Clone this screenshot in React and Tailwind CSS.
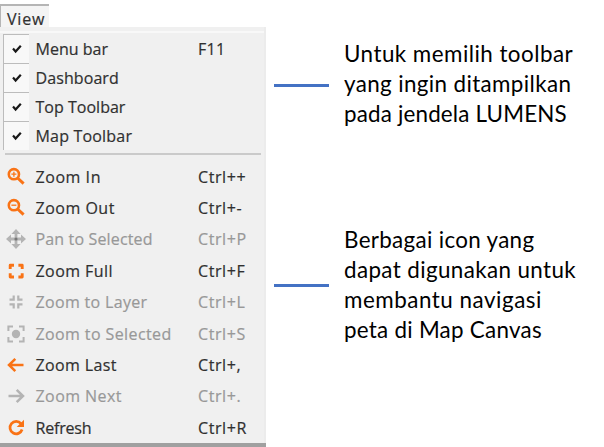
import React from "react";

const Svg = ({ children }) => (
  <svg viewBox="0 0 20 20" className="h-5 w-5 shrink-0" fill="none" stroke="currentColor">
    {children}
  </svg>
);

const Magnifier = ({ plus }) => (
  <Svg>
    <circle cx="7.9" cy="7.2" r="5.1" strokeWidth="2.6" />
    <path d="M11.6 11L17.6 16.6" strokeWidth="3" />
    <path d={plus ? "M5.4 7.2h5M7.9 4.7v5" : "M5.4 7.2h5"} strokeWidth="1.3" />
  </Svg>
);

const Pan = () => (
  <Svg>
    <path d="M10 0l4.6 5H5.4zM10 20l4.6-5H5.4zM0 10l5-4.6v9.2zM20 10l-5-4.6v9.2z" fill="currentColor" stroke="none" />
    <path d="M10 4v12M4 10h12" strokeWidth="2.8" />
    <circle cx="10" cy="10" r="1.6" fill="#777" stroke="none" />
  </Svg>
);

const Full = () => (
  <Svg>
    <path d="M4.2 8V4.2H8M12.4 4.2h3.8V8M16.2 12.2V16h-3.8M8 16H4.2v-3.8" strokeWidth="2.9" strokeLinejoin="round" />
  </Svg>
);

const Layer = () => (
  <Svg>
    <path d="M3.5 7.7h4.2V3.5M16.5 7.7h-4.2V3.5M3.5 12.3h4.2v4.2M16.5 12.3h-4.2v4.2" strokeWidth="2.2" />
  </Svg>
);

const Selected = () => (
  <Svg>
    <path d="M2.4 7V2.4H7M13 2.4h4.6V7M17.6 13v4.6H13M7 17.6H2.4V13" strokeWidth="2" />
    <circle cx="10" cy="10" r="4.2" fill="currentColor" stroke="none" />
  </Svg>
);

const Arrow = ({ right }) => (
  <Svg>
    <path d={right ? "M2.5 10h14M10.7 3.8L17 10l-6.3 6.2" : "M17.5 10h-14M9.3 3.8L3 10l6.3 6.2"} strokeWidth="2.5" />
  </Svg>
);

const Reload = () => (
  <Svg>
    <path d="M15 5.7A6.2 6.2 0 1 0 16.1 11.5" strokeWidth="2.7" />
    <path d="M18 1.8v7.3h-7.3z" fill="currentColor" stroke="none" />
  </Svg>
);

const toggles = [
  ["Menu bar", "F11", "tracking-[0.02px]"],
  ["Dashboard", "", "tracking-[0.09px]"],
  ["Top Toolbar", "", "tracking-[0.02px]"],
  ["Map Toolbar", "", "tracking-[0.19px]"],
];

const actions = [
  ["Zoom In", "Ctrl++", <Magnifier plus />, true, "tracking-[0.55px]"],
  ["Zoom Out", "Ctrl+-", <Magnifier />, true, "tracking-[0.5px]"],
  ["Pan to Selected", "Ctrl+P", <Pan />, false, "tracking-[0.15px]"],
  ["Zoom Full", "Ctrl+F", <Full />, true, "tracking-[0.45px]"],
  ["Zoom to Layer", "Ctrl+L", <Layer />, false, "tracking-[0.33px]"],
  ["Zoom to Selected", "Ctrl+S", <Selected />, false, "tracking-[0.4px]"],
  ["Zoom Last", "Ctrl+,", <Arrow />, true, "tracking-[0.37px]"],
  ["Zoom Next", "Ctrl+.", <Arrow right />, false, "tracking-[0.43px]"],
  ["Refresh", "Ctrl+R", <Reload />, true, "tracking-[-0.2px]"],
];

const Note = ({ lines, rule }) => (
  <div className="flex items-start">
    <div className={"h-[3px] w-[55px] shrink-0 bg-[#4472c4] " + rule} />
    <div className="ml-[15px] whitespace-nowrap text-[22.4px] leading-[30px] text-black">
      {lines.map(([text, tracking]) => (
        <p key={text} className={tracking}>{text}</p>
      ))}
    </div>
  </div>
);

export default function App() {
  return (
    <div className="flex h-[447px] w-[604px] overflow-hidden bg-white">
      <div className="flex w-[266px] shrink-0 flex-col font-['Open_Sans','Noto_Sans',sans-serif] text-[16px] text-[#303030] [-webkit-text-stroke:0.2px]">
        <div className="mt-1 h-[23px] w-[49px] border-l border-t-2 border-[#b5b5b5] bg-[#f4f4f4] pl-1.5 leading-[26px] tracking-[0.8px]">View</div>
        <div className="flex h-[416px] flex-col border-r-2 border-[#ececec] bg-[#f0f0f0]">
          <div className="mt-1 h-[2px] shrink-0 bg-[#f8f8f8]" />
          <div className="mt-px flex flex-col">
            {toggles.map(([label, key, tracking]) => (
              <div key={label} className="flex h-[29px] items-center pl-[3px]">
                <div className="flex h-[29px] w-[26px] items-center justify-center border-l border-t border-[#bcbcbc] bg-[#f8f8f8]">
                  <svg viewBox="0 0 10 10" className="h-2.5 w-2.5" fill="none" stroke="#181818">
                    <path d="M1 4.6L3.6 7.5L8.8 1.8" strokeWidth="2.2" />
                  </svg>
                </div>
                <span className={"ml-[6.5px] w-[162.5px] " + tracking}>{label}</span>
                <span className="tracking-[0.3px]">{key}</span>
              </div>
            ))}
          </div>
          <div className="ml-[5px] mt-[3px] h-[2px] w-[256px] shrink-0 bg-[#cacaca]" />
          <div className="mt-[6px] flex flex-col">
            {actions.map(([label, key, icon, on, tracking]) => (
              <div key={label} className={"flex h-[31.4px] items-center pl-[6px] " + (on ? "text-[#303030]" : "text-[#989898]")}>
                <span className={on ? "text-[#f97316]" : "text-[#b4b4b4]"}>{icon}</span>
                <span className={"ml-[9.5px] w-[162.5px] " + tracking}>{label}</span>
                <span className="tracking-[0.6px]">{key}</span>
              </div>
            ))}
          </div>
        </div>
        <div className="h-1 bg-[#a0a0a0]" />
      </div>
      <div className="ml-2 flex flex-col font-['Lato','Open_Sans',sans-serif]">
        <div className="mt-[39px] h-[186px]">
          <Note
            rule="mt-[45px]"
            lines={[
              ["Untuk memilih toolbar", "tracking-[0.46px]"],
              ["yang ingin ditampilkan", "tracking-[0.37px]"],
              ["pada jendela LUMENS", "tracking-[0.17px]"],
            ]}
          />
        </div>
        <Note
          rule="mt-[59px]"
          lines={[
            ["Berbagai icon yang", "tracking-[0.32px]"],
            ["dapat digunakan untuk", "tracking-[0.38px]"],
            ["membantu navigasi", "tracking-[0.52px]"],
            ["peta di Map Canvas", "tracking-[0.26px]"],
          ]}
        />
      </div>
    </div>
  );
}
